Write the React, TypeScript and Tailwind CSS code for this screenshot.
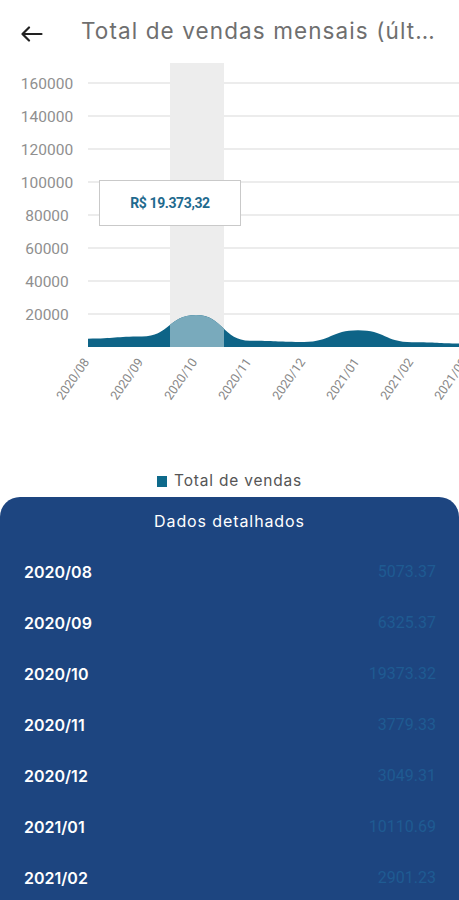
import React from "react";

const data = [
  { label: "2020/08", v: 5073.37 },
  { label: "2020/09", v: 6325.37 },
  { label: "2020/10", v: 19373.32 },
  { label: "2020/11", v: 3779.33 },
  { label: "2020/12", v: 3049.31 },
  { label: "2021/01", v: 10110.69 },
  { label: "2021/02", v: 2901.23 },
  { label: "2021/03", v: 2100.0 },
];

const rows = [
  ["2020/08", "5073.37"],
  ["2020/09", "6325.37"],
  ["2020/10", "19373.32"],
  ["2020/11", "3779.33"],
  ["2020/12", "3049.31"],
  ["2021/01", "10110.69"],
  ["2021/02", "2901.23"],
  ["2021/03", "2100.00"],
];

const X0 = 88;
const DX = 54;
const BASE = 347;
const yOf = (v: number) => BASE - (v / 20000) * 33;

function areaPath() {
  const p = data.map((d, i) => [X0 + DX * i, yOf(d.v)]);
  let d = `M ${p[0][0]} ${BASE} L ${p[0][0]} ${p[0][1]}`;
  for (let i = 0; i < p.length - 1; i++) {
    const xm = (p[i][0] + p[i + 1][0]) / 2;
    d += ` C ${xm} ${p[i][1]} ${xm} ${p[i + 1][1]} ${p[i + 1][0]} ${p[i + 1][1]}`;
  }
  d += ` L ${p[p.length - 1][0]} ${BASE} Z`;
  return d;
}

const yTicks = [160000, 140000, 120000, 100000, 80000, 60000, 40000, 20000];

function Chart() {
  const path = areaPath();
  return (
    <svg width={459} height={409} viewBox="0 62 459 409" className="block">
      <defs>
        <clipPath id="hl">
          <rect x={170} y={63} width={54} height={284} />
        </clipPath>
      </defs>
      {yTicks.map((t, i) => {
        const y = 83 + i * 33;
        return (
          <g key={t}>
            <line x1={88} x2={459} y1={y} y2={y} stroke="#e6e6e6" strokeWidth={1.5} />
            <text
              x={47}
              y={y + 5.5}
              textAnchor="middle"
              fill="#8f8f8f"
              fontSize={15.5}
              fontFamily="Roboto, sans-serif"
            >
              {t}
            </text>
          </g>
        );
      })}
      <rect x={170} y={63} width={54} height={284} fill="#ededed" />
      <path d={path} fill="#0e6487" />
      <path d={path} fill="#79aabc" clipPath="url(#hl)" />
      {data.map((d, i) => {
        const cx = X0 + DX * i - 15;
        const cy = 379;
        return (
          <text
            key={d.label}
            x={cx}
            y={cy + 4}
            textAnchor="middle"
            fill="#888888"
            fontSize={12.5}
            fontFamily="Roboto, sans-serif"
            transform={`rotate(-55 ${cx} ${cy})`}
          >
            {d.label}
          </text>
        );
      })}
      <rect x={99.5} y={180.5} width={141} height={45} fill="#ffffff" stroke="#c9c9c9" strokeWidth={1} />
      <text
        x={170}
        y={208}
        textAnchor="middle"
        fill="#1f6a8e"
        fontSize={14}
        fontWeight={700}
        fontFamily="Roboto, sans-serif"
        letterSpacing={-0.4}
      >
        R$ 19.373,32
      </text>
    </svg>
  );
}

export default function App() {
  return (
    <div className="w-[459px] bg-white overflow-hidden" style={{ fontFamily: "Inter, 'Noto Sans', sans-serif" }}>
      <div className="h-[62px] flex items-center">
        <div className="w-[81px] pl-[21px] flex items-center pt-[6px]">
          <svg width="22" height="16" viewBox="0 0 22 16" fill="none">
            <path d="M1.5 8 H20.5 M8 1.5 L1.5 8 L8 14.5" stroke="#222222" strokeWidth="2.2" strokeLinecap="round" strokeLinejoin="round" />
          </svg>
        </div>
        <div className="flex-1 min-w-0 pr-[24px]">
          <div className="truncate text-[22.5px] leading-[28px] text-[#6f6f6f] tracking-[1.1px]">
            Total de vendas mensais (últimos 12 meses)
          </div>
        </div>
      </div>
      <Chart />
      <div className="h-[20px] flex items-center justify-center gap-[7px]">
        <div className="w-[10px] h-[11px] bg-[#0e6a8b]" />
        <span className="text-[15.5px] leading-[20px] text-[#555555] tracking-[0.8px]">Total de vendas</span>
      </div>
      <div className="mt-[6px] rounded-t-[20px] bg-[#1d4580]">
        <div className="pt-[12px] pb-[13px] text-center text-[16px] leading-[24px] text-white tracking-[0.9px]">
          Dados detalhados
        </div>
        {rows.map(([d, v]) => (
          <div key={d} className="h-[51px] flex items-center justify-between pl-[24px] pr-[23px]">
            <span className="text-[16px] font-semibold text-white">{d}</span>
            <span className="text-[16px] text-[#1f5b92]" style={{ fontFamily: "Roboto, sans-serif" }}>{v}</span>
          </div>
        ))}
      </div>
    </div>
  );
}
